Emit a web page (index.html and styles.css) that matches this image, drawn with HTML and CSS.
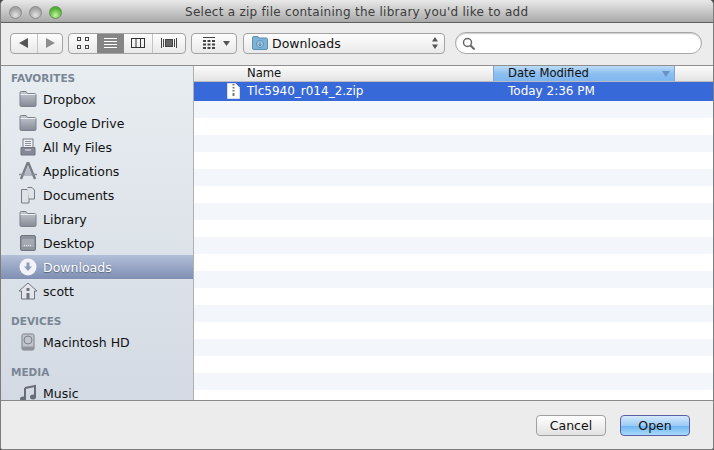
FILE: index.html
```html
<!DOCTYPE HTML>
<html>
<head>
<meta charset="UTF-8">
<title>Select a zip file</title>
<link rel="stylesheet" href="styles.css">
</head>
<body>
<svg class="defs" width="0" height="0">
	<defs>
		<linearGradient id="folderFill" x1="0" y1="0" x2="0" y2="1">
			<stop offset="0" stop-color="#c6c9d1"/>
			<stop offset="1" stop-color="#858a96"/>
		</linearGradient>
		<symbol id="folder" viewBox="0 0 20 18">
			<path d="M2 2.500Q2 1.500 3.500 1.500H8L9.500 3.500H16.500Q18 3.500 18 5V15.500Q18 16.500 16.500 16.500H3.500Q2 16.500 2 15.500Z" fill="url(#folderFill)" stroke="#7c808a"/>
			<path d="M2.500 4.500H17.500" stroke="#eceef2"/>
		</symbol>
	</defs>
</svg>
<div class="window">
	<div class="titlebar">
		<div class="lights">
			<span class="light"></span>
			<span class="light"></span>
			<span class="light green"></span>
		</div>
		<div class="title">Select a zip file containing the library you'd like to add</div>
	</div>

	<div class="toolbar">
		<div class="btn-group nav">
			<span class="seg"><svg width="10" height="10" viewBox="0 0 10 10"><path d="M9 0V10L0 5Z" fill="#555"/></svg></span>
			<span class="seg"><svg width="10" height="10" viewBox="0 0 10 10"><path d="M1 0V10L10 5Z" fill="#8e8e8e"/></svg></span>
		</div>
		<div class="btn-group views">
			<span class="seg">
				<svg width="12" height="12" viewBox="0 0 12 12" fill="none" stroke="#444"><rect x=".5" y=".5" width="3" height="3"/><rect x="8.500" y=".5" width="3" height="3"/><rect x=".5" y="8.500" width="3" height="3"/><rect x="8.500" y="8.500" width="3" height="3"/></svg>
			</span>
			<span class="seg on">
				<svg width="13" height="13" viewBox="0 0 13 13" stroke="#fff"><path d="M0 1.500H13M0 4.500H13M0 7.500H13M0 10.500H13"/></svg>
			</span>
			<span class="seg">
				<svg width="14" height="10" viewBox="0 0 14 10" fill="none" stroke="#333"><rect x=".5" y=".5" width="13" height="9"/><path d="M5 0V10M9.500 0V10"/></svg>
			</span>
			<span class="seg">
				<svg width="16" height="10" viewBox="0 0 16 10" fill="none" stroke="#444"><rect x="4.500" y="1.500" width="7" height="7" fill="#666"/><path d="M.5 0V10M2.500 1V9M13.500 1V9M15.500 0V10"/></svg>
			</span>
		</div>
		<div class="btn-group arrange">
			<svg width="12" height="12" viewBox="0 0 12 12" fill="#444"><rect width="12" height="1"/><rect y="3" width="3" height="2"/><rect x="4.500" y="3" width="3" height="2"/><rect x="9" y="3" width="3" height="2"/><rect y="6.500" width="3" height="2"/><rect x="4.500" y="6.500" width="3" height="2"/><rect x="9" y="6.500" width="3" height="2"/><rect y="10" width="3" height="2"/><rect x="4.500" y="10" width="3" height="2"/><rect x="9" y="10" width="3" height="2"/></svg>
			<svg width="7" height="5" viewBox="0 0 7 5"><path d="M0 0H7L3.500 5Z" fill="#555"/></svg>
		</div>
		<div class="path-select">
			<svg width="16" height="14" viewBox="0 0 16 14"><path d="M.5 2Q.5 .5 2 .5H6L7 2H14Q15.500 2 15.500 3.500V12Q15.500 13.500 14 13.500H2Q.5 13.500 .5 12Z" fill="#7fb3d6" stroke="#5b8fb3"/><circle cx="8" cy="8" r="3.500" fill="#a5cde6" stroke="#5b8fb3"/><path d="M8 6V9.500M6.500 8.500L8 10L9.500 8.500" stroke="#4d7fa3" fill="none"/></svg>
			<span class="path-name">Downloads</span>
			<svg class="updown" width="6" height="12" viewBox="0 0 6 12"><path d="M3 0L6 4.500H0ZM3 12L0 7.500H6Z" fill="#555"/></svg>
		</div>
		<div class="search">
			<svg width="13" height="13" viewBox="0 0 13 13" fill="none" stroke="#666" stroke-width="1.500"><circle cx="5.500" cy="5.500" r="4"/><path d="M8.500 8.500L12.500 12.500" stroke-width="2"/></svg>
		</div>
	</div>

	<div class="main">
		<div class="sidebar">
			<div class="group first">FAVORITES</div>
			<div class="item"><svg class="ico"><use href="#folder"/></svg>Dropbox</div>
			<div class="item"><svg class="ico"><use href="#folder"/></svg>Google Drive</div>
			<div class="item">
				<svg class="ico" viewBox="0 0 20 18"><rect x="5" y="1" width="10" height="9" fill="#eef0f3" stroke="#777c87"/><path d="M7 3.500H13M7 5.500H13M7 7.500H13" stroke="#8a8f99"/><path d="M3 9.500H17V17H3Z" fill="#848995" stroke="#6f747f"/><path d="M7 12H13" stroke="#e6e8ec"/></svg>
				All My Files
			</div>
			<div class="item">
				<svg class="ico" viewBox="0 0 20 18"><path d="M10 0L17 17M10 0L3 17" stroke="#777c87" stroke-width="2.400" fill="none"/><path d="M1 12.500H19" stroke="#8a8f99" stroke-width="1.500"/><path d="M10 4L6 14H14Z" fill="#b4b8c1"/></svg>
				Applications
			</div>
			<div class="item">
				<svg class="ico" viewBox="0 0 20 18"><path d="M3.500 3.500H9L11 5.500V17H3.500Z" fill="#dfe2e7" stroke="#777c87"/><path d="M9.500 1.500H14L16.500 4V13H11" fill="#dfe2e7" stroke="#777c87"/></svg>
				Documents
			</div>
			<div class="item"><svg class="ico"><use href="#folder"/></svg>Library</div>
			<div class="item">
				<svg class="ico" viewBox="0 0 20 18"><rect x="2.500" y="1.500" width="15" height="15" rx="1.500" fill="#8e939e" stroke="#6f747f"/><rect x="4" y="5" width="12" height="8" fill="#a4a8b1"/><path d="M6 11.500H14" stroke="#eceef2" stroke-dasharray="1 1"/></svg>
				Desktop
			</div>
			<div class="item active">
				<svg class="ico" viewBox="0 0 20 18"><circle cx="10" cy="9" r="8.500" fill="#f1f3f7"/><path d="M8.500 4.500H11.500V8.500H14L10 13L6 8.500H8.500Z" fill="#8e9cbc"/></svg>
				Downloads
			</div>
			<div class="item">
				<svg class="ico" viewBox="0 0 20 18"><path d="M10 1L19 9H16.500V17H3.500V9H1Z" fill="#e3e5ea" stroke="#6f747f"/><rect x="8.500" y="6" width="3" height="3" fill="#6f747f"/><rect x="8.500" y="11" width="3" height="6" fill="#6f747f"/></svg>
				scott
			</div>
			<div class="group">DEVICES</div>
			<div class="item">
				<svg class="ico" viewBox="0 0 20 18"><rect x="4" y="1" width="12" height="16" rx="1.500" fill="#c2c5cc" stroke="#7c808a"/><circle cx="10" cy="7" r="4" fill="none" stroke="#7c808a"/><path d="M4 13.500H16V17H4Z" fill="#8e939e"/></svg>
				Macintosh HD
			</div>
			<div class="group">MEDIA</div>
			<div class="item">
				<svg class="ico" viewBox="0 0 20 18"><path d="M7 4L17 2V13" fill="none" stroke="#686d78" stroke-width="2"/><path d="M7 4V15" stroke="#686d78" stroke-width="2"/><ellipse cx="5" cy="15" rx="3" ry="2.500" fill="#686d78"/><ellipse cx="15" cy="13" rx="3" ry="2.500" fill="#686d78"/></svg>
				Music
			</div>
		</div>

		<div class="files">
			<div class="head">
				<div class="col-name">Name</div>
				<div class="col-date">Date Modified<svg width="8" height="6" viewBox="0 0 8 6"><path d="M0 0H8L4 6Z" fill="#6a93c4"/></svg></div>
			</div>
			<div class="row selected">
				<div class="cell-name">
					<svg width="13" height="16" viewBox="0 0 13 16"><path d="M.5 .5H8.500L12.500 4.500V15.500H.5Z" fill="#fff" stroke="#d8dce6"/><path d="M5.500 1H7.500V2.500H5.500ZM5.500 4H7.500V5.500H5.500ZM5.500 7H7.500V8.500H5.500ZM5.500 10H7.500V13H5.500Z" fill="#777"/></svg>
					<span>Tlc5940_r014_2.zip</span>
				</div>
				<div class="cell-date">Today 2:36 PM</div>
			</div>
			<div class="stripes"></div>
		</div>
	</div>

	<div class="footer">
		<button class="push">Cancel</button>
		<button class="push primary">Open</button>
	</div>
</div>
</body>
</html>
```
FILE: styles.css
```css
*{
	margin:0px;
	padding:0px;
	box-sizing:border-box;
}
body{
	width:714px;
	height:450px;
	overflow:hidden;
	background:#4a4a4a;
	font-family:"DejaVu Sans","Liberation Sans",sans-serif;
	font-size:12.500px;
	color:#111;
}
.defs{
	position:absolute;
}
.window{
	width:714px;
	height:450px;
	display:flex;
	flex-direction:column;
	background:#ececec;
	border:1px solid #7d7d7d;
	border-top:0;
	border-radius:5px 5px 3px 3px;
	overflow:hidden;
}

/*title bar*/
.titlebar{
	height:23px;
	flex:none;
	display:flex;
	align-items:center;
	background:linear-gradient(#e9e9e9,#a9a9a9);
	border-bottom:1px solid #5f5f5f;
	padding:2px 0 0 8px;
}
.lights{
	display:flex;
	gap:7px;
	width:176px;
	flex:none;
}
.light{
	width:13px;
	height:13px;
	border-radius:50%;
	background:radial-gradient(circle at 50% 75%,#e4e4e4,#a2a2a2 70%);
	border:1px solid #8b8b8b;
}
.light.green{
	background:radial-gradient(circle at 50% 75%,#c4f5a0,#4fae30 70%);
	border-color:#5e9450;
}
.title{
	font-size:12px;
	letter-spacing:.27px;
	color:#3c3c3c;
	white-space:nowrap;
}

/*toolbar*/
.toolbar{
	height:43px;
	flex:none;
	display:flex;
	align-items:center;
	padding:0 11px 2px 9px;
	background:#ececec;
	border-bottom:1px solid #8e8e8e;
}
.btn-group{
	height:21px;
	display:flex;
	align-items:center;
	background:linear-gradient(#fdfdfd,#e9e9e9);
	border:1px solid #a3a3a3;
	border-radius:4px;
	overflow:hidden;
}
.seg{
	height:100%;
	display:flex;
	align-items:center;
	justify-content:center;
}
.seg + .seg{
	border-left:1px solid #c4c4c4;
}
.nav{
	width:53px;
	margin-right:5px;
}
.nav .seg{
	width:50%;
}
.views{
	width:118px;
	margin-right:5px;
}
.views .seg{
	width:28px;
}
.views .seg:last-child{
	width:34px;
}
.views .seg.on{
	background:#858585;
	border:0;
}
.views .seg.on + .seg{
	border:0;
}
.arrange{
	width:46px;
	margin-right:6px;
	gap:8px;
	padding-left:11px;
}
.path-select{
	width:202px;
	height:21px;
	display:flex;
	align-items:center;
	gap:4px;
	padding:0 6px 0 8px;
	background:linear-gradient(#fdfdfd,#e9e9e9);
	border:1px solid #a3a3a3;
	border-radius:4px;
	margin-right:10px;
}
.path-name{
	flex:1;
}
.search{
	flex:1;
	height:22px;
	display:flex;
	align-items:center;
	padding-left:6px;
	background:#fff;
	border:1px solid #a8a8a8;
	border-radius:11px;
	box-shadow:inset 0 1px 1px #ccc;
}

/*main area*/
.main{
	flex:1;
	min-height:0;
	display:flex;
	border-bottom:1px solid #8a8a8a;
}
.sidebar{
	width:193px;
	flex:none;
	overflow:hidden;
	background:linear-gradient(#e8edf1,#d3dae3);
	border-right:1px solid #b0b0b0;
}
.group{
	height:17px;
	margin-top:10px;
	padding-left:10px;
	font-size:10.500px;
	font-weight:bold;
	line-height:17px;
	color:#7a8694;
}
.group.first{
	margin-top:4px;
}
.item{
	height:24px;
	display:flex;
	align-items:center;
	gap:5px;
	padding-left:17px;
	white-space:nowrap;
}
.ico{
	width:20px;
	height:18px;
	flex:none;
}
.item.active{
	background:linear-gradient(#b3bfd9,#7f8fb2);
	color:#fff;
	text-shadow:0 1px 1px #56627e;
}

/*file list*/
.files{
	flex:1;
	min-width:0;
	display:flex;
	flex-direction:column;
}
.head{
	height:16px;
	flex:none;
	display:flex;
	background:linear-gradient(#fbfbfb,#e4e4e4);
	border-bottom:1px solid #bdbdbd;
	font-size:11.600px;
	line-height:15px;
}
.col-name{
	width:299px;
	padding-left:53px;
}
.col-date{
	width:182px;
	display:flex;
	justify-content:space-between;
	align-items:center;
	padding:0 4px 0 14px;
	background:linear-gradient(#bcdcf7,#8dbff0 50%,#7eb6ef);
	border:1px solid #7ea6d6;
	border-width:0 1px;
}
.row{
	height:19px;
	flex:none;
	display:flex;
	align-items:center;
	font-size:12px;
	padding-bottom:1px;
}
.row.selected{
	background:#3869d9;
	color:#fff;
}
.cell-name{
	width:299px;
	display:flex;
	align-items:center;
	gap:7px;
	padding-left:33px;
}
.cell-date{
	padding-left:15px;
}
.stripes{
	flex:1;
	background:repeating-linear-gradient(#f3f6fb 0,#f3f6fb 17px,#fff 17px,#fff 34px);
}

/*bottom buttons*/
.footer{
	height:48px;
	flex:none;
	display:flex;
	justify-content:flex-end;
	align-items:center;
	gap:14px;
	padding:0 23px 0 0;
	background:#ececec;
}
.push{
	width:70px;
	height:21px;
	font-family:inherit;
	font-size:12.500px;
	color:#111;
	background:linear-gradient(#fff,#f0f0f0 50%,#e2e2e2);
	border:1px solid #a0a0a0;
	border-radius:4px;
}
.push.primary{
	background:linear-gradient(#d6e9fc,#9ccbf6 50%,#72b7f3 55%,#a8dafa);
	border-color:#5e5fa0;
}
```
